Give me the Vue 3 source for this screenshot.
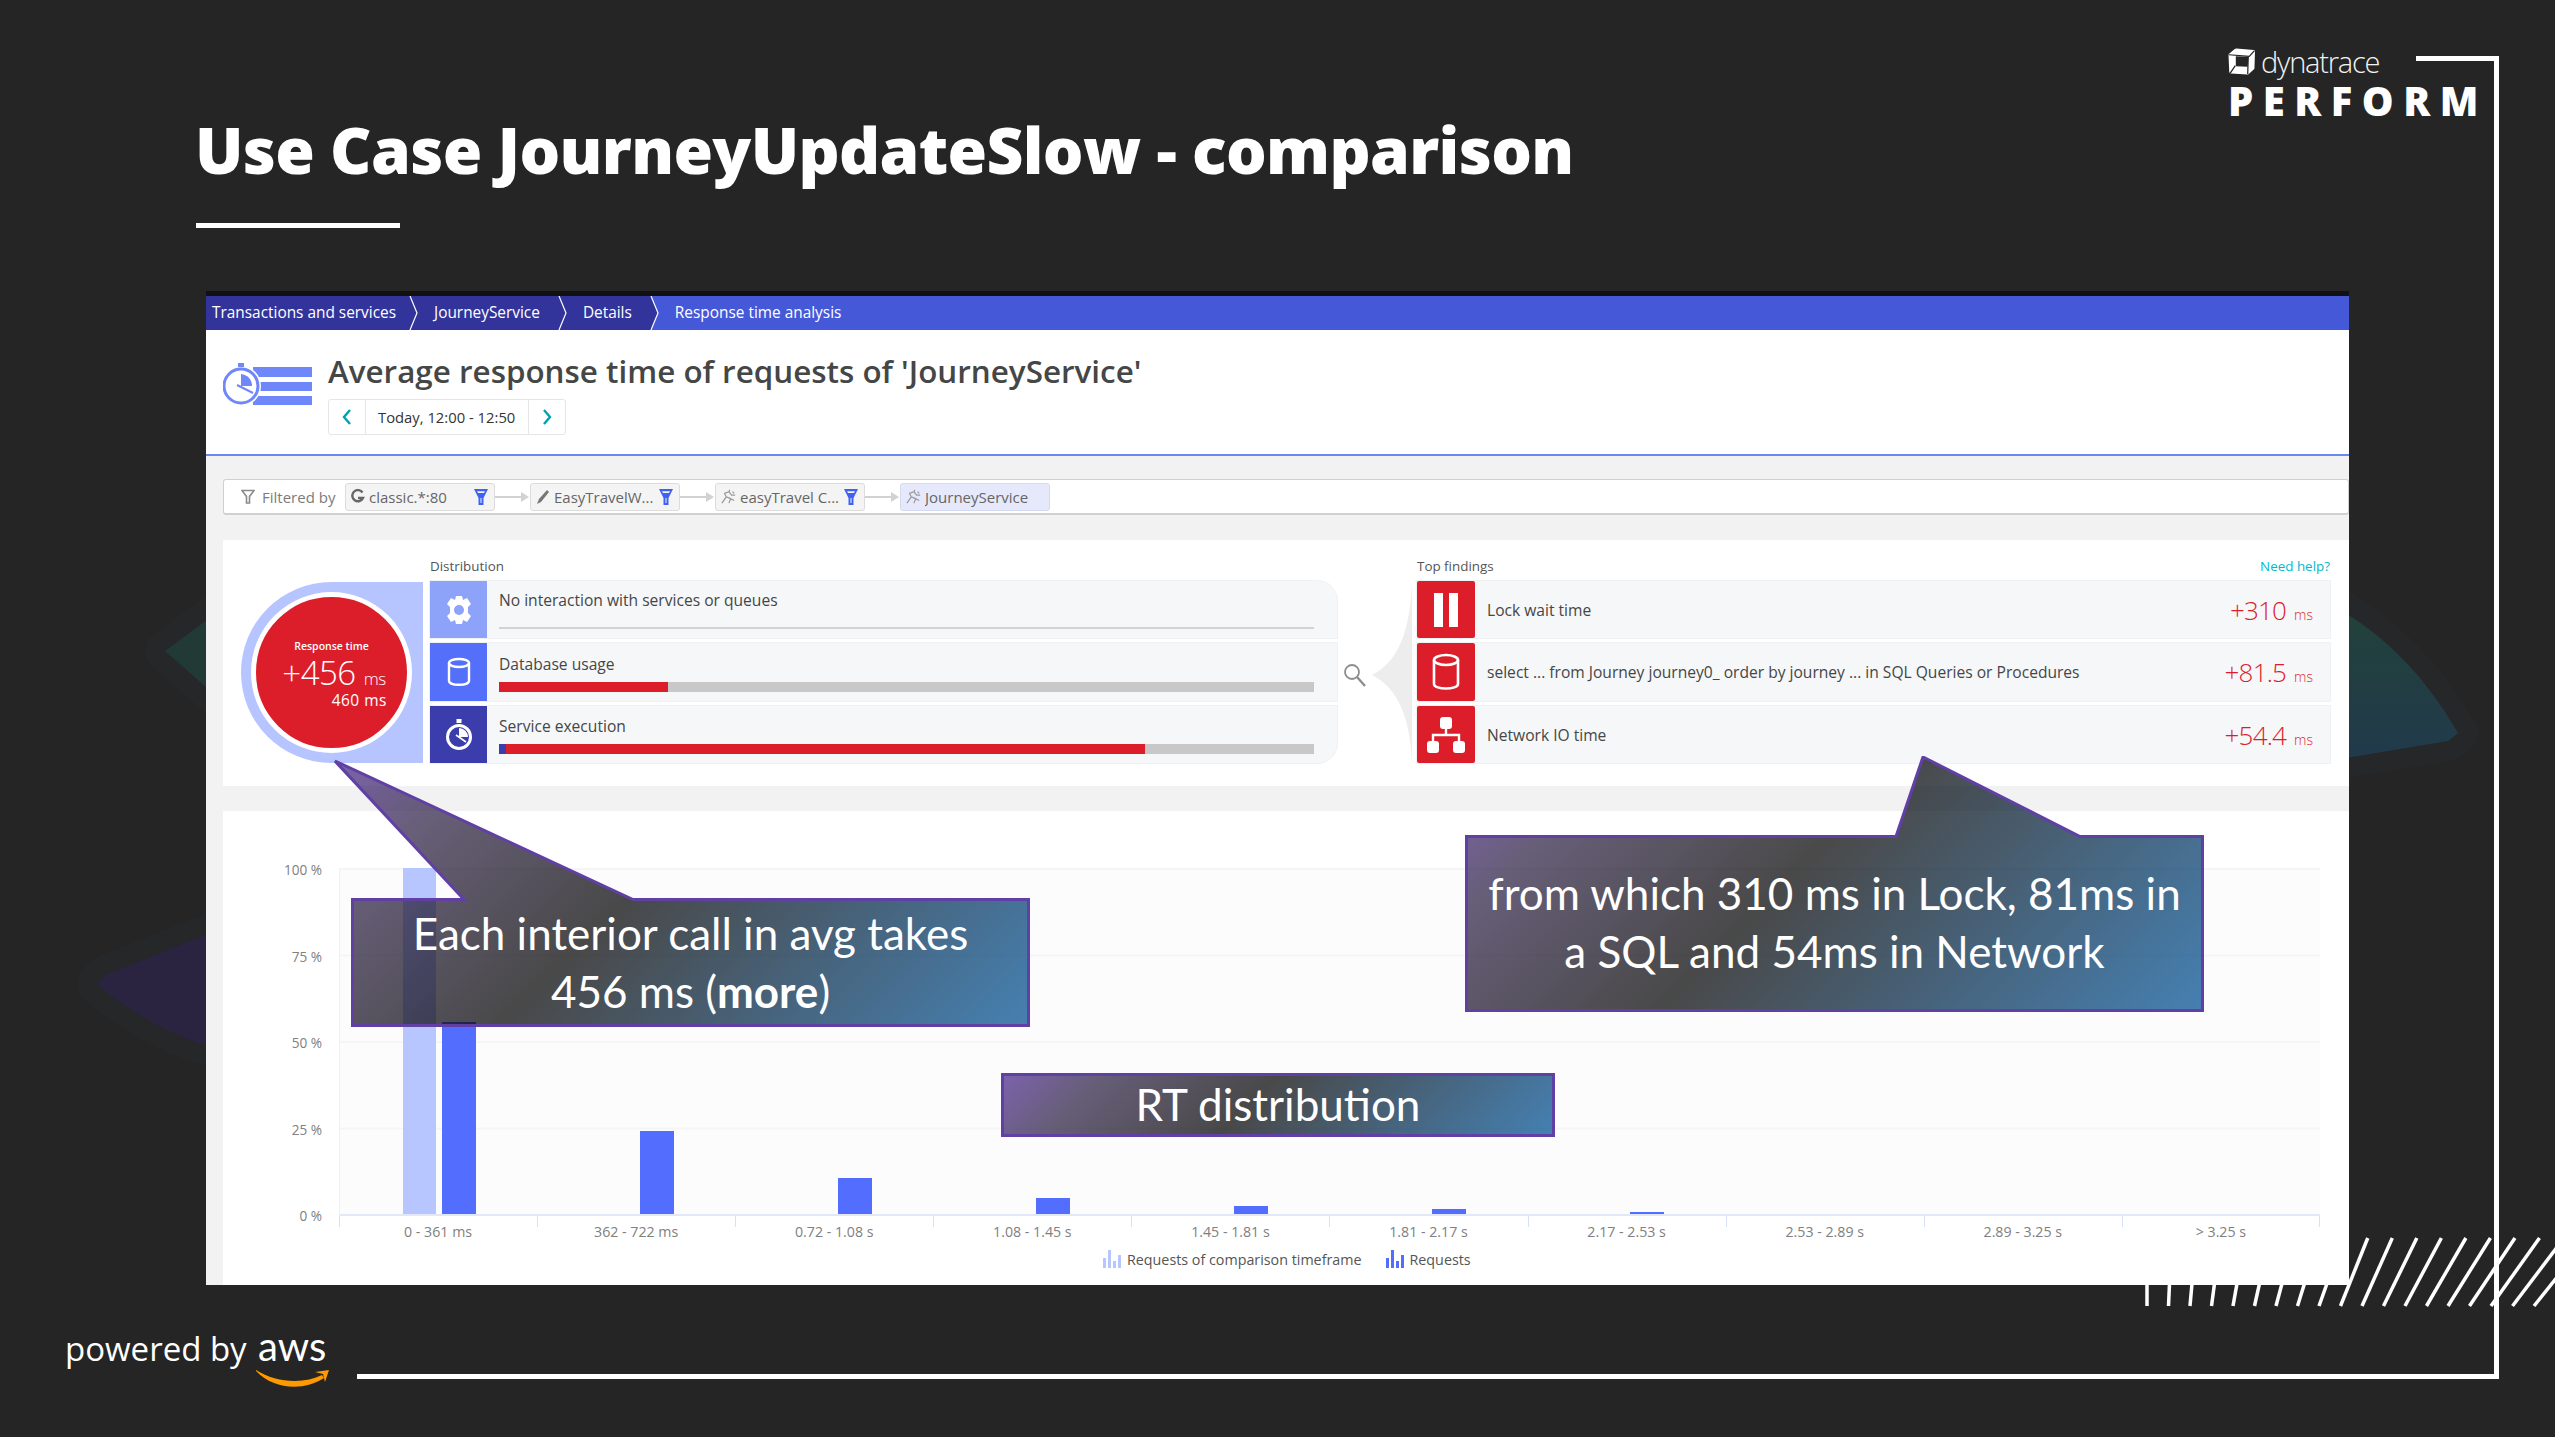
<script setup>
const crumbs = ['Transactions and services', 'JourneyService', 'Details']

const chips = [
  { label: 'classic.*:80', icon: 'g' },
  { label: 'EasyTravelW...', icon: 'pen' },
  { label: 'easyTravel C...', icon: 'svc' },
  { label: 'JourneyService', icon: 'svc', active: true },
]

const distribution = [
  { label: 'No interaction with services or queues', icon: 'gear', tone: 'light', parts: [] },
  { label: 'Database usage', icon: 'db', tone: 'mid', parts: [{ w: 169, c: '#dc1e2b' }] },
  {
    label: 'Service execution',
    icon: 'clock',
    tone: 'dark',
    parts: [
      { w: 7, c: '#3a3dab' },
      { w: 639, c: '#dc1e2b' },
    ],
  },
]

const findings = [
  { label: 'Lock wait time', value: '+310', icon: 'pause' },
  { label: 'select ... from Journey journey0_ order by journey ... in SQL Queries or Procedures', value: '+81.5', icon: 'db' },
  { label: 'Network IO time', value: '+54.4', icon: 'net' },
]

const yLabels = ['100 %', '75 %', '50 %', '25 %', '0 %']

const buckets = [
  { label: '0 - 361 ms', light: 346, dark: 192 },
  { label: '362 - 722 ms', light: 0, dark: 83 },
  { label: '0.72 - 1.08 s', light: 0, dark: 36 },
  { label: '1.08 - 1.45 s', light: 0, dark: 16 },
  { label: '1.45 - 1.81 s', light: 0, dark: 8 },
  { label: '1.81 - 2.17 s', light: 0, dark: 5 },
  { label: '2.17 - 2.53 s', light: 0, dark: 2 },
  { label: '2.53 - 2.89 s', light: 0, dark: 0 },
  { label: '2.89 - 3.25 s', light: 0, dark: 0 },
  { label: '> 3.25 s', light: 0, dark: 0 },
]

// decorative hatching, leans more with every stroke
const stripes = Array.from({ length: 19 }, (_, i) => {
  const x = 2147 + i * 21.5
  return { x1: x, x2: x + i * 3.03 }
})
</script>

<template>
  <div class="slide">
    <svg class="backdrop" width="2555" height="1437" viewBox="0 0 2555 1437">
      <defs>
        <linearGradient id="teal" x1="0" y1="0" x2="0" y2="1">
          <stop offset="0" stop-color="#22413a" />
          <stop offset="1" stop-color="#213a4c" />
        </linearGradient>
      </defs>
      <path class="glow" d="M165 651 L215 614 V695 Z" />
      <path class="glow" d="M97 984 L105 975 L215 931 V1048 Q150 1030 97 984 Z" />
      <path class="glow" d="M2340 610 Q2410 650 2458 733 L2448 741 L2340 759 Z" />
      <path fill="#213a36" d="M165 651 L215 614 V695 Z" />
      <path fill="#2a2440" d="M97 984 L105 975 L215 931 V1048 Q150 1030 97 984 Z" />
      <path fill="url(#teal)" d="M2340 610 Q2410 650 2458 733 L2448 741 L2340 759 Z" />
      <line
        v-for="(s, i) in stripes"
        :key="i"
        :x1="s.x1"
        y1="1306"
        :x2="s.x2"
        y2="1238"
        stroke="#fff"
        stroke-width="3.5"
      />
    </svg>

    <header class="slide-head">
      <div>
        <h1 class="slide-title">Use Case JourneyUpdateSlow - comparison</h1>
        <div class="title-rule"></div>
      </div>
      <div class="brand">
        <div class="brand-top">
          <svg width="27" height="27" viewBox="0 0 26 26">
            <path fill="#fff" d="M8 0.5 L25 2 Q26 2 26 3 L25.5 19 Q25.5 20 25 20.5 L20 25 Q19.5 25.5 18.5 25.5 L3 24.5 Q1.5 24.5 1.2 23 L0.5 7 Q0.5 6 1 5.5 L6.5 1 Q7 0.5 8 0.5 Z" />
            <path fill="#252525" d="M7.5 8 L19.5 8.5 L19 18 L7.5 17.5 Z" />
            <path fill="none" stroke="#252525" stroke-width="1.2" d="M1 6.5 L20.5 8 L25.5 2.5 M7 17 L2 24.5 M19.5 8 L19 25" />
          </svg>
          <span class="brand-name">dynatrace</span>
        </div>
        <div class="brand-event">PERFORM</div>
      </div>
    </header>

    <main class="panel">
      <nav class="crumbs">
        <template v-for="c in crumbs" :key="c">
          <span class="crumb">{{ c }}</span>
          <svg class="crumb-sep" :class="{ last: c === 'Details' }" width="14" height="34" viewBox="0 0 14 34">
            <path fill="#33349b" d="M0 0 H4 L11 17 L4 34 H0 Z" />
            <path fill="none" stroke="#fff" stroke-width="1.2" d="M4 0 L11 17 L4 34" />
          </svg>
        </template>
        <span class="crumb crumb-current">Response time analysis</span>
      </nav>

      <section class="page-head">
        <svg class="head-icon" width="90" height="44" viewBox="0 0 90 44">
          <g fill="#6f87f8">
            <rect x="30" y="4" width="59" height="10" />
            <rect x="30" y="19" width="59" height="9" />
            <rect x="30" y="33" width="59" height="9" />
          </g>
          <circle cx="18" cy="23" r="20" fill="#fff" />
          <circle cx="18" cy="23" r="17" fill="#fff" stroke="#6f87f8" stroke-width="3" />
          <rect x="15" y="0" width="6" height="4" fill="#6f87f8" />
          <path fill="#6f87f8" d="M18 11 A12 12 0 0 1 29 23 L18 23 Z" />
          <path fill="none" stroke="#6f87f8" stroke-width="2" d="M14 22 L30 30" />
        </svg>
        <div>
          <h2 class="page-title">Average response time of requests of 'JourneyService'</h2>
          <div class="timeframe">
            <span class="tf-nav">
              <svg width="12" height="18" viewBox="0 0 12 18"><path fill="none" stroke="#00a1b2" stroke-width="2.4" d="M9 2 L3 9 L9 16" /></svg>
            </span>
            <span class="tf-label">Today, 12:00 - 12:50</span>
            <span class="tf-nav">
              <svg width="12" height="18" viewBox="0 0 12 18"><path fill="none" stroke="#00a1b2" stroke-width="2.4" d="M3 2 L9 9 L3 16" /></svg>
            </span>
          </div>
        </div>
      </section>

      <div class="page-body">
        <div class="filter-bar">
          <svg class="filter-funnel" width="14" height="16" viewBox="0 0 14 16">
            <path fill="none" stroke="#8a8a8a" stroke-width="1.6" d="M1 1.5 H13 L8.5 7.5 V14 H5.5 V7.5 Z" />
          </svg>
          <span class="filter-caption">Filtered by</span>
          <template v-for="(chip, i) in chips" :key="chip.label">
            <span v-if="i > 0" class="chip-link">
              <svg width="35" height="12" viewBox="0 0 35 12">
                <path fill="#d2d2d2" d="M0 5 H26 V1 L34 6 L26 11 V7 H0 Z" />
              </svg>
            </span>
            <span class="chip" :class="{ 'chip-active': chip.active }">
              <svg v-if="chip.icon === 'g'" class="chip-icon" width="14" height="16" viewBox="0 0 14 16">
                <path fill="none" stroke="#666" stroke-width="2.4" d="M11.5 3.5 A5.6 5.6 0 1 0 12 9 H7" />
              </svg>
              <svg v-else-if="chip.icon === 'pen'" class="chip-icon" width="14" height="16" viewBox="0 0 14 16">
                <path fill="#777" d="M1 15 L3 10 L11 1 L13 3 L5 13 Z" />
              </svg>
              <svg v-else class="chip-icon" width="15" height="15" viewBox="0 0 17 17">
                <path fill="none" stroke="#9a9a9a" stroke-width="1.4" d="M1 16 L6 9 L4 5 L9 3 L12 7 L16 7 M9 3 L10 1 M6 9 L11 11 L9 16 M11 11 L15 13 M13 3 L15 5" />
              </svg>
              <span class="chip-text">{{ chip.label }}</span>
              <svg v-if="!chip.active" class="chip-filter" width="14" height="18" viewBox="0 0 14 18">
                <path fill="#3f62f5" d="M0 1 H14 L9.5 10 V17 H4.5 V10 Z" />
                <path fill="#f4f4f4" d="M3 3.2 H11 L10 5 H4 Z M6.5 10 H7.5 V15 H6.5 Z" />
              </svg>
            </span>
          </template>
        </div>

        <section class="card analysis">
          <div class="gauge">
            <div class="gauge-disc">
              <span class="gauge-caption">Response time</span>
              <span class="gauge-delta">+456<small>ms</small></span>
              <span class="gauge-base">460 ms</span>
            </div>
          </div>

          <div class="dist">
            <div class="col-label">Distribution</div>
            <div class="rows">
              <div v-for="row in distribution" :key="row.label" class="row">
                <div class="row-icon" :class="'tone-' + row.tone">
                  <svg v-if="row.icon === 'gear'" width="28" height="30" viewBox="0 0 28 30">
                    <path fill="#fff" d="M11 1 H17 L18 5 L22 3 L26 9 L23 12 V18 L26 21 L22 27 L18 25 L17 29 H11 L10 25 L6 27 L2 21 L5 18 V12 L2 9 L6 3 L10 5 Z" />
                    <circle cx="14" cy="15" r="5" :fill="'#8da2f9'" />
                  </svg>
                  <svg v-else-if="row.icon === 'db'" width="24" height="30" viewBox="0 0 24 30">
                    <ellipse cx="12" cy="6" rx="10" ry="4" fill="none" stroke="#fff" stroke-width="2.4" />
                    <path fill="none" stroke="#fff" stroke-width="2.4" d="M2 6 V24 C2 29 22 29 22 24 V6" />
                  </svg>
                  <svg v-else width="28" height="32" viewBox="0 0 28 32">
                    <rect x="11.5" y="0" width="5" height="4" fill="#fff" />
                    <circle cx="14" cy="18" r="11.5" fill="none" stroke="#fff" stroke-width="3" />
                    <path fill="#fff" d="M14 9 A9 9 0 0 1 23 18 L14 18 Z" />
                    <path fill="none" stroke="#fff" stroke-width="1.6" d="M11 16 L21 23" />
                  </svg>
                </div>
                <div class="row-body">
                  <span class="row-label">{{ row.label }}</span>
                  <div class="usage" :class="{ 'usage-empty': !row.parts.length }">
                    <span
                      v-for="(p, i) in row.parts"
                      :key="i"
                      class="usage-part"
                      :style="{ width: p.w + 'px', background: p.c }"
                    ></span>
                  </div>
                </div>
              </div>
            </div>
          </div>

          <div class="link-glyphs">
            <svg width="24" height="24" viewBox="0 0 24 24">
              <circle cx="9" cy="9" r="7" fill="none" stroke="#8e8e8e" stroke-width="1.8" />
              <path fill="none" stroke="#8e8e8e" stroke-width="2.4" d="M14 14 L22 23" />
            </svg>
            <svg width="44" height="181" viewBox="0 0 44 181">
              <path fill="#ededed" d="M44 0 C42 50 30 80 4 93 C30 106 42 135 44 181 Z" />
            </svg>
          </div>

          <div class="findings">
            <div class="col-label findings-head">
              <span>Top findings</span>
              <span class="help">Need help?</span>
            </div>
            <div class="rows">
              <div v-for="f in findings" :key="f.label" class="row finding">
                <div class="row-icon finding-icon">
                  <svg v-if="f.icon === 'pause'" width="26" height="34" viewBox="0 0 26 34">
                    <rect x="1" y="0" width="9" height="34" fill="#fff" />
                    <rect x="16" y="0" width="9" height="34" fill="#fff" />
                  </svg>
                  <svg v-else-if="f.icon === 'db'" width="28" height="38" viewBox="0 0 28 38">
                    <ellipse cx="14" cy="7" rx="12" ry="5" fill="none" stroke="#fff" stroke-width="2.6" />
                    <path fill="none" stroke="#fff" stroke-width="2.6" d="M2 7 V31 C2 37 26 37 26 31 V7" />
                  </svg>
                  <svg v-else width="38" height="36" viewBox="0 0 38 36">
                    <g fill="#fff">
                      <rect x="13" y="0" width="12" height="12" rx="3" />
                      <rect x="0" y="24" width="12" height="12" rx="3" />
                      <rect x="26" y="24" width="12" height="12" rx="3" />
                    </g>
                    <path fill="none" stroke="#fff" stroke-width="2.4" d="M19 12 V18 M6 24 V18 H32 V24" />
                  </svg>
                </div>
                <span class="finding-label">{{ f.label }}</span>
                <span class="finding-value">{{ f.value }}<small>ms</small></span>
              </div>
            </div>
          </div>
        </section>

        <section class="card chart">
          <div class="y-axis">
            <span v-for="y in yLabels" :key="y">{{ y }}</span>
          </div>
          <div class="chart-main">
            <div class="plot">
              <div v-for="b in buckets" :key="b.label" class="bucket">
                <span class="bar bar-light" :style="{ height: b.light + 'px' }"></span>
                <span class="bar bar-dark" :style="{ height: b.dark + 'px' }"></span>
              </div>
            </div>
            <div class="x-axis">
              <span v-for="b in buckets" :key="b.label" class="x-cell">{{ b.label }}</span>
            </div>
            <div class="legend">
              <svg width="18" height="18" viewBox="0 0 18 18">
                <path fill="#b8c6ff" d="M0 8 H3 V18 H0 Z M5 0 H8 V18 H5 Z M10 11 H13 V18 H10 Z M15 5 H18 V18 H15 Z" />
              </svg>
              <span class="legend-text">Requests of comparison timeframe</span>
              <svg width="18" height="18" viewBox="0 0 18 18">
                <path fill="#536dfe" d="M0 8 H3 V18 H0 Z M5 0 H8 V18 H5 Z M10 11 H13 V18 H10 Z M15 5 H18 V18 H15 Z" />
              </svg>
              <span class="legend-text">Requests</span>
            </div>
          </div>
        </section>
      </div>
    </main>

    <footer class="slide-foot">
      <span class="powered">powered by</span>
      <span class="aws">
        <span class="aws-word">aws</span>
        <svg class="aws-smile" width="74" height="22" viewBox="0 -1 74 22">
          <path fill="#f90" d="M0 0 C20 13 48 14 66 5 L68 8 C48 21 18 20 0 1 Z" />
          <path fill="#f90" d="M59 2 L73 0 L69 12 L67 4 Z" />
        </svg>
      </span>
      <div class="foot-rule"></div>
    </footer>

    <div class="frame-top"></div>
    <div class="frame-side"></div>

    <div class="callout callout-avg">
      <svg class="callout-shape" width="696" height="269" viewBox="0 0 696 269">
        <defs>
          <linearGradient id="fill-avg" gradientUnits="userSpaceOnUse" x1="0" y1="0" x2="482" y2="482">
            <stop offset="0" stop-color="#4b298d" />
            <stop offset="0.16" stop-color="#2f2346" />
            <stop offset="0.45" stop-color="#060606" />
            <stop offset="1" stop-color="#015296" />
          </linearGradient>
        </defs>
        <path class="shape" fill="url(#fill-avg)" d="M18.5 141.5 H130 L1 3 L1 3 L299 141.5 H694.5 V267.5 H18.5 Z" />
      </svg>
      <p class="callout-text">Each interior call in avg takes<br />456 ms (<b>more</b>)</p>
    </div>

    <div class="callout callout-split">
      <svg class="callout-shape" width="739" height="256" viewBox="0 0 739 256">
        <defs>
          <linearGradient id="fill-split" gradientUnits="userSpaceOnUse" x1="0" y1="0" x2="497" y2="497">
            <stop offset="0" stop-color="#4b298d" />
            <stop offset="0.16" stop-color="#2f2346" />
            <stop offset="0.45" stop-color="#060606" />
            <stop offset="1" stop-color="#015296" />
          </linearGradient>
        </defs>
        <path class="shape" fill="url(#fill-split)" d="M1.5 80.5 H431 L458 1 L615 80.5 H737.5 V254.5 H1.5 Z" />
      </svg>
      <p class="callout-text">from which 310 ms in Lock, 81ms in<br />a SQL and 54ms in Network</p>
    </div>

    <div class="callout-flat">RT distribution</div>
  </div>
</template>

<style>
html,
body {
  margin: 0;
  background: #252525;
}
</style>

<style scoped>
.slide {
  position: relative;
  width: 2555px;
  height: 1437px;
  overflow: hidden;
  background: #252525;
  font-family: 'Open Sans', 'Liberation Sans', sans-serif;
}

.backdrop {
  position: absolute;
  left: 0;
  top: 0;
}

.glow {
  fill: none;
  stroke: rgba(38, 48, 52, 0.25);
  stroke-width: 40px;
  stroke-linejoin: round;
}

.slide-head {
  position: relative;
  display: flex;
  justify-content: space-between;
  height: 291px;
  padding: 0 77px 0 195px;
  box-sizing: border-box;
}

.slide-title {
  margin: 108px 0 0 0;
  font-size: 64px;
  line-height: 84px;
  font-weight: 800;
  letter-spacing: -0.65px;
  color: #fff;
}

.title-rule {
  width: 204px;
  height: 5px;
  margin: 31px 0 0 1px;
  background: #fff;
}

.brand {
  padding-top: 48px;
  width: 250px;
}

.brand-top {
  display: flex;
  align-items: center;
  gap: 6px;
  height: 27px;
}

.brand-name {
  font-size: 29px;
  font-weight: 300;
  letter-spacing: -1.2px;
  color: #f2f2f2;
  line-height: 27px;
}

.brand-event {
  margin-top: 6px;
  font-size: 40px;
  line-height: 40px;
  font-weight: 800;
  letter-spacing: 9.5px;
  color: #fff;
  white-space: nowrap;
}

.panel {
  position: relative;
  width: 2143px;
  height: 994px;
  margin-left: 206px;
  border-top: 5px solid #111;
  box-sizing: border-box;
  display: flex;
  flex-direction: column;
  background: #fff;
}

.crumbs {
  display: flex;
  align-items: center;
  height: 34px;
  flex: none;
  background: #4558d8;
  color: #fff;
  font-size: 15.4px;
}

.crumb {
  display: flex;
  align-items: center;
  height: 34px;
  box-sizing: border-box;
  padding: 0 15px 2px 6px;
  background: #33349b;
}

.crumb:first-child {
  padding-right: 10px;
}

.crumb-current {
  background: none;
  padding-left: 14px;
}

.crumb-sep {
  flex: none;
  background: #33349b;
  border-right: 8px solid #33349b;
}

.crumb-sep.last {
  background: none;
  border-right: 0;
}

.page-head {
  display: flex;
  gap: 15px;
  height: 126px;
  flex: none;
  box-sizing: border-box;
  padding: 18px 0 0 17px;
  border-bottom: 2px solid #6f87f0;
  background: #fff;
}

.head-icon {
  margin-top: 15px;
  flex: none;
  width: 90px;
}

.page-title {
  margin: 0;
  font-size: 31.4px;
  line-height: 46px;
  font-weight: 600;
  color: #454646;
}

.timeframe {
  display: inline-flex;
  align-items: center;
  height: 36px;
  margin-top: 5px;
  box-sizing: border-box;
  border: 1px solid #e6e6e6;
  border-radius: 3px;
  font-size: 14.8px;
  color: #333;
}

.tf-nav {
  display: flex;
  align-items: center;
  justify-content: center;
  width: 36px;
  height: 100%;
}

.tf-label {
  display: flex;
  align-items: center;
  width: 164px;
  height: 100%;
  box-sizing: border-box;
  padding-left: 12px;
  border-left: 1px solid #e6e6e6;
  border-right: 1px solid #e6e6e6;
  white-space: nowrap;
}

.page-body {
  flex: 1;
  min-height: 0;
  background: #f2f2f2;
  padding: 23px 0 0 17px;
}

.filter-bar {
  display: flex;
  align-items: center;
  height: 36px;
  box-sizing: border-box;
  padding-left: 17px;
  background: #fff;
  border: 2px solid #d0d0d0;
  border-width: 1px 1px 2px 1px;
  border-radius: 3px;
  font-size: 15px;
}

.filter-funnel {
  margin-right: 7px;
}

.filter-caption {
  width: 83px;
  color: #7c7c7c;
  white-space: nowrap;
}

.chip {
  display: flex;
  align-items: center;
  width: 150px;
  height: 28px;
  box-sizing: border-box;
  padding: 0 6px 0 5px;
  background: #f4f4f4;
  border: 1px solid #dcdcdc;
  border-radius: 3px;
  color: #666;
}

.chip-active {
  background: #e5e9fb;
  border-color: #d5daf0;
}

.chip-icon {
  flex: none;
  margin-right: 4px;
}

.chip-text {
  flex: 1;
  white-space: nowrap;
  overflow: hidden;
}

.chip-filter {
  flex: none;
}

.chip-link {
  display: flex;
  align-items: center;
  width: 35px;
  height: 12px;
}

.card {
  background: #fff;
}

.analysis {
  display: flex;
  align-items: flex-end;
  height: 246px;
  margin-top: 25px;
  box-sizing: border-box;
  padding: 0 19px 23px 18px;
}

.gauge {
  flex: none;
  display: flex;
  align-items: center;
  width: 182px;
  height: 181px;
  padding-left: 10px;
  box-sizing: border-box;
  margin-right: 7px;
  background: #b6c4ff;
  border-radius: 91px 0 0 91px;
}

.gauge-disc {
  display: flex;
  flex-direction: column;
  align-items: center;
  width: 161px;
  height: 161px;
  box-sizing: border-box;
  padding-top: 41px;
  border: 5px solid #fff;
  border-radius: 50%;
  background: #dc1e2b;
  color: #fff;
}

.gauge-caption {
  font-size: 10.5px;
  line-height: 16px;
  font-weight: 600;
}

.gauge-delta {
  margin-left: 5px;
  font-size: 33px;
  line-height: 38px;
  font-weight: 300;
  letter-spacing: -0.5px;
  white-space: nowrap;
}

.gauge-delta small {
  margin-left: 8px;
  font-size: 17px;
}

.gauge-base {
  align-self: flex-end;
  margin: -5px 20px 0 0;
  font-size: 15.5px;
  line-height: 14px;
  letter-spacing: 0.5px;
}

.col-label {
  font-size: 13.4px;
  line-height: 14px;
  height: 22px;
  color: #555;
}

.dist {
  flex: none;
  width: 907px;
}

.rows {
  display: flex;
  flex-direction: column;
  gap: 5px;
}

.row {
  display: flex;
  height: 57px;
  background: #f6f7f9;
  box-shadow: 0 0 0 1px #f0f1f3;
}

.row:nth-child(2) {
  height: 58px;
}

.dist .row:first-child {
  border-top-right-radius: 20px;
}

.dist .row:last-child {
  border-bottom-right-radius: 20px;
}

.dist .row:nth-child(2) .row-body {
  padding-top: 11px;
}

.dist .row:last-child .row-body {
  padding-top: 10px;
}

.row-icon {
  flex: none;
  display: flex;
  align-items: center;
  justify-content: center;
  width: 57px;
}

.tone-light {
  background: #8da2f9;
}

.tone-mid {
  background: #5470fb;
}

.tone-dark {
  background: #3a3dab;
}

.row-body {
  flex: 1;
  display: flex;
  flex-direction: column;
  justify-content: space-between;
  box-sizing: border-box;
  padding: 9px 23px 9px 12px;
}

.row-label {
  font-size: 15.6px;
  line-height: 20px;
  color: #454646;
}

.usage {
  display: flex;
  height: 10px;
  background: #c8c8c8;
}

.usage-empty {
  height: 2px;
  background: #d2d2d2;
}

.usage-part {
  display: block;
  height: 100%;
}

.link-glyphs {
  flex: none;
  display: flex;
  align-items: center;
  width: 80px;
  height: 181px;
  box-sizing: border-box;
  padding-left: 6px;
}

.link-glyphs svg:first-child {
  flex: none;
  margin-top: 4px;
  margin-right: 1px;
}

.findings {
  flex: 1;
  min-width: 0;
}

.findings-head {
  display: flex;
  justify-content: space-between;
}

.help {
  color: #00b9cc;
}

.finding {
  align-items: center;
}

.finding-icon {
  align-self: stretch;
  width: 58px;
  background: #dc1e2b;
  border-radius: 2px;
}

.finding-label {
  flex: 1;
  margin-left: 12px;
  font-size: 15.6px;
  color: #454646;
}

.finding-value {
  margin-right: 17px;
  font-size: 26px;
  font-weight: 300;
  letter-spacing: -0.8px;
  color: #dc1e2b;
}

.finding-value small {
  margin-left: 8px;
  font-size: 14px;
  letter-spacing: 0;
}

.chart {
  display: flex;
  height: 474px;
  margin-top: 25px;
  box-sizing: border-box;
  padding: 57px 29px 0 0;
}

.y-axis {
  flex: none;
  display: flex;
  flex-direction: column;
  justify-content: space-between;
  align-items: flex-end;
  width: 99px;
  height: 362px;
  margin: -6px 17px 0 0;
  font-size: 13.6px;
  line-height: 16px;
  color: #808080;
}

.chart-main {
  flex: 1;
  min-width: 0;
}

.plot {
  display: flex;
  align-items: flex-end;
  height: 348px;
  box-sizing: border-box;
  border-bottom: 2px solid #e3e8f8;
  border-left: 1px solid #f0f1f3;
  background-color: #fcfcfd;
  background-image: linear-gradient(#f4f5f6 2px, transparent 2px);
  background-size: 100% 86.5px;
}

.bucket {
  flex: 1;
  display: flex;
  justify-content: center;
  align-items: flex-end;
  gap: 6px;
}

.bar {
  display: block;
}

.bar-light {
  width: 33px;
  background: #b8c6ff;
}

.bar-dark {
  width: 34px;
  background: #536dfe;
}

.x-axis {
  display: flex;
}

.x-cell {
  flex: 1;
  height: 27px;
  line-height: 31px;
  text-align: center;
  font-size: 14.2px;
  color: #808080;
  background: linear-gradient(#d8e0f5, #d8e0f5) left top / 1px 11px no-repeat;
}

.x-cell:last-child {
  background:
    linear-gradient(#d8e0f5, #d8e0f5) left top / 1px 11px no-repeat,
    linear-gradient(#d8e0f5, #d8e0f5) right top / 1px 11px no-repeat;
}

.legend {
  display: flex;
  align-items: center;
  height: 24px;
  margin-top: 4px;
  padding-left: 764px;
  font-size: 14.3px;
  color: #555;
}

.legend svg {
  margin-right: 6px;
}

.legend-text {
  margin-right: 24px;
}

.slide-foot {
  position: relative;
  display: flex;
  align-items: flex-start;
  height: 152px;
  padding: 0 56px 0 65px;
  box-sizing: border-box;
}

.powered {
  flex: none;
  width: 178px;
  margin-top: 41px;
  font-size: 33px;
  line-height: 46px;
  white-space: nowrap;
  color: #fff;
}

.aws {
  position: relative;
  flex: none;
  width: 70px;
  margin: 38px 0 0 15px;
}

.aws-word {
  display: block;
  font-family: 'Lato', sans-serif;
  font-size: 40px;
  line-height: 46px;
  color: #fff;
}

.aws-smile {
  position: absolute;
  left: -2px;
  top: 46px;
}

.foot-rule {
  flex: 1;
  height: 5px;
  margin: 89px 0 0 29px;
  background: #fff;
}

.frame-top {
  position: absolute;
  left: 2416px;
  top: 56px;
  width: 83px;
  height: 5px;
  background: #fff;
}

.frame-side {
  position: absolute;
  left: 2494px;
  top: 56px;
  width: 5px;
  height: 1323px;
  background: #fff;
}

.callout {
  position: absolute;
}

.callout-avg {
  left: 334px;
  top: 758px;
  width: 696px;
  height: 269px;
}

.callout-split {
  left: 1465px;
  top: 756px;
  width: 739px;
  height: 256px;
}

.callout-shape {
  position: absolute;
  left: 0;
  top: 0;
}

.shape {
  fill-opacity: 0.73;
  stroke: #6040a4;
  stroke-width: 3px;
}

.callout-text {
  position: absolute;
  margin: 0;
  right: 0;
  bottom: 0;
  text-align: center;
  font-family: 'Lato', sans-serif;
  font-size: 44px;
  line-height: 58px;
  color: #fff;
}

.callout-avg .callout-text {
  left: 17px;
  height: 129px;
  padding-top: 6px;
  box-sizing: border-box;
}

.callout-split .callout-text {
  left: 0;
  height: 177px;
  padding-top: 29px;
  box-sizing: border-box;
}

.callout-flat {
  position: absolute;
  left: 1001px;
  top: 1073px;
  width: 554px;
  height: 64px;
  box-sizing: border-box;
  border: 3px solid #6040a4;
  background: linear-gradient(
    135deg,
    rgba(75, 41, 141, 0.73),
    rgba(47, 35, 70, 0.73) 16%,
    rgba(6, 6, 6, 0.73) 45%,
    rgba(1, 82, 150, 0.73)
  );
  text-align: center;
  font-family: 'Lato', sans-serif;
  font-size: 44px;
  line-height: 56px;
  color: #fff;
}
</style>
